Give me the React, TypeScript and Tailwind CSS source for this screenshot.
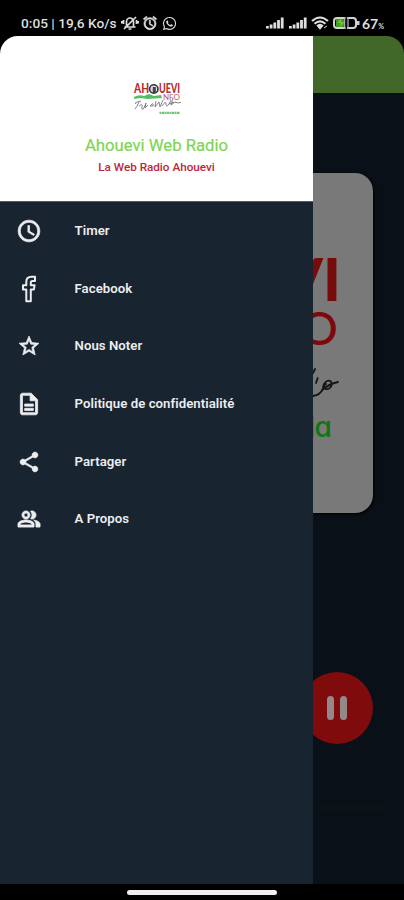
import type { ReactNode } from "react";
import {
  MdAccessTime,
  MdAlarm,
  MdOutlineDescription,
  MdOutlinePeopleAlt,
  MdShare,
  MdStarBorder,
} from "react-icons/md";
import { FaWhatsapp } from "react-icons/fa";

function FacebookIcon() {
  return (
    <svg width="16" height="28" viewBox="0 0 16 28" fill="transparent" stroke="currentColor" strokeWidth="2" strokeLinejoin="round">
      <path d="M14 1.800h-3.400C7.200 1.800 5.300 4 5.300 7v3.200H2v4.200h3.300v11.800h4.500V14.400h3.100l.7-4.200H9.800V7.600c0-1.100.6-1.700 1.700-1.700H14z" />
    </svg>
  );
}

function MutedBellIcon() {
  return (
    <svg width="18" height="16" viewBox="0 0 18 16" fill="none" stroke="currentColor" strokeWidth="1.700">
      <path d="M5.500 12V6.500a3.500 3.500 0 0 1 7 0V12M3.500 12h11M7.500 14h3M3 14 15 2M2.500 5v4M.8 6v2.500M15.500 5v4M17.200 6v2.500" />
    </svg>
  );
}

function SignalIcon() {
  return (
    <svg width="18" height="12" viewBox="0 0 18 12" fill="currentColor">
      <path d="M0 9h2.800v2.500H0zM3.700 7.500h2.800v4H3.700zM7.400 5.500h2.800v6H7.400zM11.100 3h2.800v8.500h-2.800zM14.800.5h2.800v11h-2.800z" />
    </svg>
  );
}

function WifiIcon() {
  return (
    <svg width="18" height="14" viewBox="0 0 18 14" fill="none" stroke="currentColor" strokeWidth="2.100">
      <path d="M1 5Q9-2 17 5M3.500 7.700q5.500-4.700 11 0M6 10.200q3-2.500 6 0" />
      <path d="m7 10.800 2-1 2 1-2 2.500zM13 12l3-2" fill="currentColor" strokeWidth="1" />
    </svg>
  );
}

function BatteryIcon() {
  return (
    <svg width="28" height="14" viewBox="0 0 28 14" fill="none">
      <rect x="1" y="2" width="22" height="10" rx="3" stroke="#d2d2d2" strokeWidth="2" />
      <path d="M24 5h2.500v4H24z" fill="#d2d2d2" />
      <rect x="3" y="3" width="8" height="8" rx="1" fill="#4c982b" />
      <path d="M11.700 1v12M15 1v12" stroke="#bbb" strokeWidth="1.200" />
      <path d="M13.300 1v12" stroke="#111" strokeWidth="1.500" />
      <path d="m8 2-3 5h3l-1 4 4-5H8z" fill="#65d82d" />
    </svg>
  );
}

function StatusBar() {
  return (
    <header className="flex h-9 shrink-0 justify-between pl-[21px] pr-[20px] pt-[14px] text-[#dedede]">
      <div className="flex h-[18px] items-center">
        <span className="w-[97px] whitespace-nowrap text-[13.700px] font-medium">0:05 | 19,6 Ko/s</span>
        <span className="ml-[3px]"><MutedBellIcon /></span>
        <MdAlarm className="ml-[3px] size-4 [&_[fill=none]]:stroke-none" stroke="currentColor" strokeWidth="1" />
        <FaWhatsapp className="ml-1 size-[15px]" />
      </div>
      <div className="flex h-[18px] items-center">
        <SignalIcon />
        <span className="ml-[5px]"><SignalIcon /></span>
        <span className="ml-1"><WifiIcon /></span>
        <span className="ml-1"><BatteryIcon /></span>
        <span className="ml-px font-[Lato] text-[14px] font-bold">67<span className="text-[7px]">%</span></span>
      </div>
    </header>
  );
}

function DrawerLogo() {
  return (
    <svg width="48" height="36" viewBox="0 0 48 36" fontFamily="Lato, sans-serif">
      <text x="1" y="11" fontSize="12.500" fontWeight="900" fill="#b52b2e" textLength="15" lengthAdjust="spacingAndGlyphs">AH</text>
      <text x="26" y="11" fontSize="12.500" fontWeight="900" fill="#b52b2e" textLength="21" lengthAdjust="spacingAndGlyphs">UEVI</text>
      <circle cx="20.800" cy="7" r="4.200" fill="#ddd" stroke="#353535" strokeWidth="1.600" />
      <path d="M19.800 5h3v6h-3z" fill="#444" />
      <path d="M1 15q5-3 10-1l5-2 5 2 7-1 1 3-14 1-8-1-6 1z" fill="#55bd65" />
      <text x="30" y="18" fontSize="7.500" fill="#bc5960" textLength="17" lengthAdjust="spacingAndGlyphs">NFO</text>
      <path d="M3 22q-2-1 1-2l4-1M6 20q-2 5-4 7m4-3q4-3 3 1t2 1l2-5-1 5 3-3m3 0q3-3 2 1h-3zm5-4-1 6 4-5 1 5 3-7m-1 6q4-6 4-2t3 0l2-4m-2 4 5-2m-1-4-2 7 4-3 3 1 4-1" fill="none" stroke="#777" strokeWidth=".9" />
      <path d="M26.500 30.800h20.500" stroke="#64c86b" strokeWidth="2.200" strokeDasharray="2 .5" />
    </svg>
  );
}

function MenuItem({ icon, label }: { icon: ReactNode; label: string }) {
  return (
    <li className="flex h-[57.700px] items-center">
      <span className="ml-[15px] flex w-7 justify-center [&_[fill=none]]:stroke-none">{icon}</span>
      <span className="ml-[31.500px] whitespace-nowrap text-[13.200px] font-semibold tracking-[0.050px]">{label}</span>
    </li>
  );
}

function Drawer() {
  return (
    <aside className="flex w-[313px] shrink-0 flex-col bg-[#182430]">
      <div className="flex h-[166px] shrink-0 flex-col items-center border-b border-[#535d69] bg-white pt-[46px]">
        <DrawerLogo />
        <h1 className="mt-[17px] text-[16.700px] leading-[22px] text-[#80d453] [-webkit-text-stroke:0.200px_#80d453]">Ahouevi Web Radio</h1>
        <p className="mt-[2px] text-[11.700px] font-medium leading-4 text-[#bd263c]">La Web Radio Ahouevi</p>
      </div>
      <ul className="text-[#ecedef]">
        <MenuItem icon={<MdAccessTime className="size-[26px]" stroke="currentColor" strokeWidth="0.700" />} label="Timer" />
        <MenuItem icon={<FacebookIcon />} label="Facebook" />
        <MenuItem icon={<MdStarBorder className="size-6" stroke="currentColor" strokeWidth="0.700" />} label="Nous Noter" />
        <MenuItem icon={<MdOutlineDescription className="size-[26px]" stroke="currentColor" strokeWidth="0.700" />} label="Politique de confidentialité" />
        <MenuItem icon={<MdShare className="size-6" stroke="currentColor" strokeWidth="0.500" />} label="Partager" />
        <MenuItem icon={<MdOutlinePeopleAlt className="size-6" stroke="currentColor" strokeWidth="0.900" />} label="A Propos" />
      </ul>
    </aside>
  );
}

function CoverArt() {
  return (
    <svg width="60" height="340" viewBox="0 0 60 340" className="block">
      <text x="-31.500" y="128" fontFamily="Lato, sans-serif" fontWeight="900" fontSize="59" fill="#770c0d">V</text>
      <text x="10" y="128" fontFamily="Lato, sans-serif" fontWeight="900" fontSize="59" fill="#770c0d">I</text>
      <text x="-12" y="172" fontFamily="Lato, sans-serif" fontWeight="500" fontSize="46" fill="#7d090d">O</text>
      <path d="M0 200 2 196M3 210l1.700-5M0 223q7-1 10-7 0-6 4-8c6-2 6 6 1 8-4 1-6-3-2-5M9 217q7-6 16-8" fill="none" stroke="#151515" strokeWidth="1.800" strokeLinecap="round" />
      <text x="1.500" y="263.500" fontFamily="Inter, sans-serif" fontWeight="500" fontSize="28" fill="#0c7714" style={{ fontFeatureSettings: '"cv11"' }}>a</text>
      <path d="M.3 242v22" stroke="#248227" strokeWidth=".6" />
    </svg>
  );
}

function Player() {
  return (
    <main className="flex min-w-0 flex-1 flex-col overflow-hidden bg-[#0a1017]">
      <div className="h-[57px] shrink-0 bg-[#416829]" />
      <section className="mt-20 h-[340px] w-[60px] shrink-0 overflow-hidden rounded-r-[18px] bg-[#797979] shadow-[1px_1px_3px_#000]">
        <CoverArt />
      </section>
      <div className="-ml-3 mt-[159px] flex size-[72px] shrink-0 items-center justify-center gap-[6px] rounded-full bg-[#7f0b0d]">
        <span className="h-6 w-[7px] rounded-full bg-[#938988]" />
        <span className="h-6 w-[7px] rounded-full bg-[#938988]" />
      </div>
      <div className="ml-1 mt-[61px] h-[6px] w-[65px] rounded-full bg-[#0c1317]" />
    </main>
  );
}

export default function App() {
  return (
    <div className="flex h-[900px] w-[404px] flex-col overflow-hidden bg-black font-[Roboto,sans-serif]">
      <StatusBar />
      <div className="flex h-[848px] shrink-0 overflow-hidden rounded-t-[18px]">
        <Drawer />
        <Player />
      </div>
      <footer className="flex flex-1 justify-center pt-[6px]">
        <div className="h-[5px] w-[150px] rounded-full bg-[#eee]" />
      </footer>
    </div>
  );
}
